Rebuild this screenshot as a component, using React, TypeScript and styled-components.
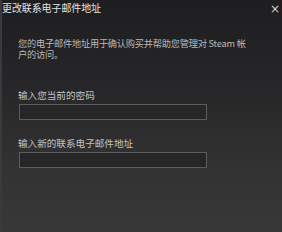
import React from 'react';
import styled, { createGlobalStyle } from 'styled-components';

const GlobalStyle = createGlobalStyle`
  html, body {
    margin: 0;
    padding: 0;
    background: #1f1f21;
  }
`;

const App = () => {
  return (
    <>
      <GlobalStyle />
      <Dialog>
        <TitleBar>
          <Title>更改联系电子邮件地址</Title>
          <Close>×</Close>
        </TitleBar>
        <Body>
          <Intro>您的电子邮件地址用于确认购买并帮助您管理对 Steam 帐户的访问。</Intro>
          <Field>
            <Label>输入您当前的密码</Label>
            <Input type="password" />
          </Field>
          <Field>
            <Label>输入新的联系电子邮件地址</Label>
            <Input type="text" />
          </Field>
        </Body>
      </Dialog>
    </>
  );
};

const Dialog = styled.div`
  width: 282px;
  height: 232px;
  box-sizing: border-box;
  background: linear-gradient(to bottom, #1e1e20 0%, #262628 35%, #333334 75%, #383838 100%);
  border-left: 2px solid #3a3a3c;
  font-family: 'Noto Sans CJK SC', 'Liberation Sans', sans-serif;
  overflow: hidden;
`;
const TitleBar = styled.div`
  display: flex;
  justify-content: space-between;
  align-items: center;
  height: 16px;
  padding: 0 2px 0 0;
`;
const Title = styled.div`
  font-size: 10px;
  line-height: 16px;
  color: #e2e2e2;
  letter-spacing: -0.1px;
`;
const Close = styled.div`
  font-family: 'DejaVu Sans', sans-serif;
  font-size: 12px;
  line-height: 14px;
  color: #d4d4d4;
  margin-top: 1px;
`;
const Body = styled.div`
  display: flex;
  flex-direction: column;
  gap: 17px;
  padding: 22px 0 0 16px;
`;
const Intro = styled.p`
  margin: 0;
  width: 236px;
  font-size: 9.2px;
  line-height: 11px;
  letter-spacing: -0.2px;
  color: #bababa;
  margin-bottom: 12px;
`;
const Field = styled.div`
  display: flex;
  flex-direction: column;
  gap: 3px;
`;
const Label = styled.div`
  font-size: 9.6px;
  line-height: 12px;
  color: #c2c2c2;
`;
const Input = styled.input`
  width: 188px;
  height: 16px;
  box-sizing: border-box;
  margin: 0 0 0 1px;
  background: #262627;
  border: 1px solid #5c5c5c;
  outline: none;
  padding: 0 3px;
`;

export default App;
